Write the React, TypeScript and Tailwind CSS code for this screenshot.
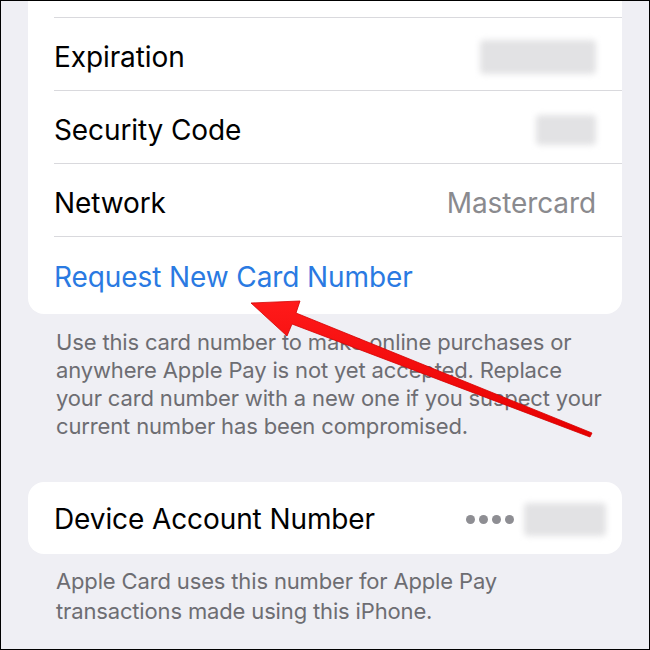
import React from 'react';

const font = { fontFamily: 'Inter, "Noto Sans", sans-serif' };

const Row: React.FC<{ label: string; children?: React.ReactNode; last?: boolean }> = ({ label, children, last }) => (
  <div className="pl-[26px]">
    <div className={`h-[73px] pt-[5px] flex items-center justify-between pr-[26px] ${last ? '' : 'border-b border-[#d9d9dd]'}`}>
      <span className="text-[28px] text-black tracking-[-0.1px]">{label}</span>
      {children}
    </div>
  </div>
);

const Blur: React.FC<{ w: number; h: number }> = ({ w, h }) => (
  <div className="bg-[#e2e2e4] blur-[3px] rounded-sm" style={{ width: w, height: h }} />
);

const Arrow: React.FC = () => (
  <svg className="absolute left-0 top-0 pointer-events-none" width="650" height="650" viewBox="0 0 650 650">
    <defs>
      <linearGradient id="ar" x1="0" y1="0" x2="0" y2="1">
        <stop offset="0" stopColor="#ff1a1a" />
        <stop offset="1" stopColor="#e60000" />
      </linearGradient>
    </defs>
    <polygon
      points="250,302 299,300 295,312 591,432 589,436 291,323 286,335"
      fill="url(#ar)"
      stroke="#d40000"
      strokeWidth="0.8"
      strokeLinejoin="round"
    />
  </svg>
);

const App: React.FC = () => {
  return (
    <div className="relative w-[650px] h-[650px] overflow-hidden border border-black bg-[#efeff4]" style={font}>
      <div className="mx-[27px] bg-white rounded-b-[16px]">
        <div className="h-[17px] pl-[26px]">
          <div className="h-full border-b border-[#d9d9dd]" />
        </div>
        <Row label="Expiration">
          <Blur w={116} h={34} />
        </Row>
        <Row label="Security Code">
          <Blur w={60} h={30} />
        </Row>
        <Row label="Network">
          <span className="text-[28px] text-[#8a8a8e] tracking-[-0.1px]">Mastercard</span>
        </Row>
        <div className="h-[77px] pt-[3px] pl-[26px] flex items-center">
          <span className="text-[28px] text-[#2a7ae2] tracking-[-0.1px]">Request New Card Number</span>
        </div>
      </div>
      <p className="ml-[55px] mr-[40px] mt-[14px] text-[22px] leading-[28px] text-[#6d6d72] tracking-[-0.15px]">
        Use this card number to make online purchases or anywhere Apple Pay is not yet accepted. Replace your card number with a new one if you suspect your current number has been compromised.
      </p>
      <div className="mx-[27px] mt-[42px] bg-white rounded-[16px] h-[72px] pt-[2px] pl-[26px] pr-[16px] flex items-center justify-between">
        <span className="text-[28px] text-black tracking-[-0.1px]">Device Account Number</span>
        <div className="flex items-center gap-[10px]">
          <div className="flex gap-[4px]">
            <span className="w-[9px] h-[9px] rounded-full bg-[#8e8e93]" />
            <span className="w-[9px] h-[9px] rounded-full bg-[#8e8e93]" />
            <span className="w-[9px] h-[9px] rounded-full bg-[#8e8e93]" />
            <span className="w-[9px] h-[9px] rounded-full bg-[#8e8e93]" />
          </div>
          <Blur w={82} h={33} />
        </div>
      </div>
      <p className="mx-[55px] mt-[12px] text-[22px] leading-[30px] text-[#6d6d72] tracking-[-0.15px]">
        Apple Card uses this number for Apple Pay transactions made using this iPhone.
      </p>
      <Arrow />
    </div>
  );
};

export default App;
